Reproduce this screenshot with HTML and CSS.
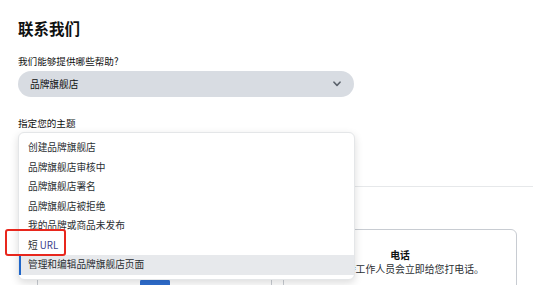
FILE: index.html
```html
<!DOCTYPE html>
<html lang="zh-CN">
<head>
<meta charset="utf-8">
<title>联系我们</title>
<link rel="stylesheet" href="styles.css">
</head>
<body>
<main class="page">
  <h1 class="title">联系我们</h1>

  <div class="field field-help">
    <label class="label">我们能够提供哪些帮助?</label>
    <div class="select">
      <span class="select-value">品牌旗舰店</span>
      <svg class="chevron" width="8" height="6" viewBox="0 0 8 6"><path d="M1 1.2 L4 4.4 L7 1.2" fill="none" stroke="#5b626b" stroke-width="1.6" stroke-linecap="round" stroke-linejoin="round"/></svg>
    </div>
  </div>

  <div class="field field-topic">
    <label class="label">指定您的主题</label>
    <div class="select-wrap">
      <div class="select select-topic"></div>
      <ul class="listbox">
        <li class="option">创建品牌旗舰店</li>
        <li class="option">品牌旗舰店审核中</li>
        <li class="option">品牌旗舰店署名</li>
        <li class="option">品牌旗舰店被拒绝</li>
        <li class="option">我的品牌或商品未发布</li>
        <li class="option">短 <span class="latin">URL</span></li>
        <li class="option option-active">管理和编辑品牌旗舰店页面</li>
        <li class="callout" aria-hidden="true"></li>
      </ul>
    </div>
  </div>

  <hr class="divider">

  <section class="methods">
    <div class="cards">
      <div class="card">
        <div class="card-spacer"></div>
        <div class="card-btn"></div>
      </div>
      <div class="card">
        <div class="card-title">电话</div>
        <div class="card-desc">卖家支持工作人员会立即给您打电话。</div>
      </div>
    </div>
  </section>
</main>
</body>
</html>
```

FILE: styles.css
```css
html, body {
  margin: 0;
  padding: 0;
  background: #ffffff;
}

body {
  font-family: "Noto Sans CJK SC", "Noto Sans", sans-serif;
  color: #0f1111;
  overflow: hidden;
}

.page {
  padding: 18px 0 0 18px;
}

.title {
  margin: 0;
  font-size: 15.5px;
  line-height: 20px;
  font-weight: 700;
  color: #0f1111;
}

.field-help {
  margin-top: 16px;
}

.field-topic {
  margin-top: 19px;
}

.label {
  display: block;
  font-size: 9.6px;
  line-height: 14px;
  color: #0f1111;
}

.select {
  margin-top: 3px;
  width: 336px;
  height: 26px;
  box-sizing: border-box;
  border-radius: 13px;
  background: #d8dce2;
  display: flex;
  align-items: center;
  justify-content: space-between;
  padding: 0 13px 0 12px;
  font-size: 9.7px;
  color: #0f1111;
}

.chevron {
  display: block;
}

.select-wrap {
  position: relative;
  margin-top: 3px;
}

.select-topic {
  margin-top: 0;
}

.listbox {
  position: absolute;
  top: -1px;
  left: 0;
  width: 337px;
  box-sizing: border-box;
  margin: 0;
  padding: 5px 0 4px 0;
  list-style: none;
  background: #ffffff;
  border: 1px solid #e4e6e8;
  border-radius: 6px;
  box-shadow: 0 3px 8px rgba(0, 0, 0, 0.14);
  z-index: 5;
}

.option {
  height: 19.5px;
  line-height: 19.5px;
  padding-left: 9px;
  font-size: 9.7px;
  color: #2b2f33;
  white-space: nowrap;
}

.latin {
  color: #3b3f8c;
}

.option-active {
  background: #e7e9ec;
  box-shadow: inset 2px 0 0 #1f66c9;
}

.callout {
  position: absolute;
  left: -14px;
  top: 96px;
  width: 61px;
  height: 27px;
  box-sizing: border-box;
  border: 2.5px solid #e8271d;
  border-radius: 3px;
}

.divider {
  margin: 27px 0 0 0;
  border: 0;
  height: 1px;
  background: #e6e8ea;
}

.methods {
  margin-top: 42px;
  height: 56px;
  overflow: hidden;
}

.cards {
  margin-left: 19px;
  display: grid;
  grid-template-columns: 235px 234px;
  column-gap: 11px;
}

.card {
  height: 110px;
  box-sizing: border-box;
  border: 1px solid #c8ccd2;
  border-radius: 6px;
  padding-top: 19px;
  text-align: center;
}

.card-spacer {
  height: 26px;
}

.card-title {
  font-size: 9.8px;
  line-height: 12px;
  font-weight: 700;
  color: #0f1111;
}

.card-desc {
  margin-top: 2px;
  font-size: 9.9px;
  line-height: 12px;
  color: #2b2f33;
  white-space: nowrap;
}

.card-btn {
  margin: 4px auto 0 auto;
  width: 30px;
  height: 18px;
  border-radius: 3px;
  background: #2f6fd1;
}
```
